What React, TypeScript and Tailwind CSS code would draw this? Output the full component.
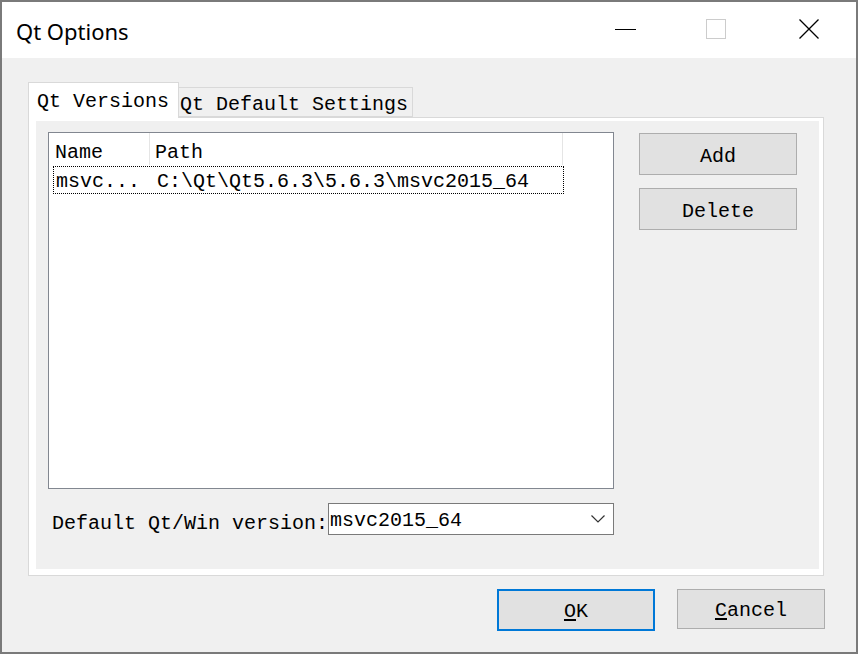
const mono = { fontFamily: '"Liberation Mono", "DejaVu Sans Mono", monospace' }

function TitleBar() {
  return (
    <div className="flex h-[56px] items-center bg-white pl-[14px]">
      <span
        className="flex-1 pt-[1px] text-[22px] text-black"
        style={{ fontFamily: '"Noto Sans", "Open Sans", sans-serif' }}
      >
        Qt Options
      </span>
      <svg width="21" height="20" viewBox="0 0 21 20" className="-mt-[2px]">
        <line x1="0" y1="10.5" x2="21" y2="10.5" stroke="#000" strokeWidth="1" />
      </svg>
      <svg width="20" height="20" viewBox="0 0 20 20" className="ml-[70px] -mt-[2px]">
        <rect x="0.5" y="0.5" width="19" height="19" fill="none" stroke="#cccccc" strokeWidth="1" />
      </svg>
      <svg width="20" height="20" viewBox="0 0 20 20" className="ml-[73px] mr-[37px] -mt-[2px]">
        <path d="M0.5 0.5 L19.5 19.5 M19.5 0.5 L0.5 19.5" stroke="#000" strokeWidth="1.3" />
      </svg>
    </div>
  )
}

function Tabs() {
  return (
    <div className="flex h-[35px] items-end">
      <div className="relative z-10 -mb-px flex h-[36px] w-[151px] items-center border border-b-0 border-[#d9d9d9] bg-white pl-[8px] pt-[2px]">
        Qt Versions
      </div>
      <div className="flex h-[30px] w-[234px] items-center border border-l-0 border-[#d9d9d9] bg-[#f0f0f0] pl-[1px] pt-[5px]">
        Qt Default Settings
      </div>
    </div>
  )
}

function VersionList() {
  return (
    <div className="h-[357px] w-[566px] border border-[#828790] bg-white">
      <div className="flex h-[32px]">
        <div className="flex w-[101px] items-center border-r border-[#e5e5e5] pl-[6px] pt-[7px]">Name</div>
        <div className="flex w-[413px] items-center border-r border-[#e5e5e5] pl-[5px] pt-[7px]">Path</div>
      </div>
      <div className="ml-[4px] mt-px flex h-[28px] w-[511px] items-center border border-dotted border-black pt-[4px]">
        <span className="w-[100px] pl-[2px]">msvc...</span>
        <span className="pl-[3px]">C:\Qt\Qt5.6.3\5.6.3\msvc2015_64</span>
      </div>
    </div>
  )
}

function SideButton({ label }: { label: string }) {
  return (
    <button className="flex h-[42px] w-[158px] items-center justify-center border border-[#adadad] bg-[#e1e1e1] pt-[5px]">
      {label}
    </button>
  )
}

export default function App() {
  return (
    <div
      className="flex h-[654px] w-[858px] flex-col border-2 border-[#7a7a7a] bg-[#f0f0f0] text-[20px] leading-none text-black"
      style={mono}
    >
      <TitleBar />
      <div className="px-[26px] pt-[24px]">
        <Tabs />
        <div className="flex h-[459px] w-[796px] flex-col border border-[#d9d9d9] bg-white pb-[6px] pl-[7px] pr-[4px] pt-[3px]">
          <div className="flex-1 bg-[#f0f0f0] pl-[12px] pt-[11px]">
            <div className="flex">
              <VersionList />
              <div className="ml-[25px] mt-px flex flex-col gap-[13px]">
                <SideButton label="Add" />
                <SideButton label="Delete" />
              </div>
            </div>
            <div className="mt-[14px] flex items-center">
              <span className="w-[280px] shrink-0 whitespace-nowrap pl-[4px] pt-[9px]">Default Qt/Win version:</span>
              <div className="flex h-[32px] w-[286px] items-center justify-between border border-[#7a7a7a] bg-white pl-[1px] pr-[8px]">
                <span className="pt-[3px]">msvc2015_64</span>
                <svg width="14" height="8" viewBox="0 0 14 8">
                  <path d="M0.5 0.5 L7 7 L13.5 0.5" fill="none" stroke="#333" strokeWidth="1.2" />
                </svg>
              </div>
            </div>
          </div>
        </div>
        <div className="mt-[13px] flex items-start pl-[469px]">
          <button className="flex h-[42px] w-[158px] items-center justify-center border-2 border-[#0078d7] bg-[#e1e1e1] pt-[4px]">
            <span><span className="underline underline-offset-2">O</span>K</span>
          </button>
          <button className="ml-[22px] flex h-[40px] w-[148px] items-center justify-center border border-[#adadad] bg-[#e1e1e1] pt-[4px]">
            <span><span className="underline underline-offset-2">C</span>ancel</span>
          </button>
        </div>
      </div>
    </div>
  )
}
